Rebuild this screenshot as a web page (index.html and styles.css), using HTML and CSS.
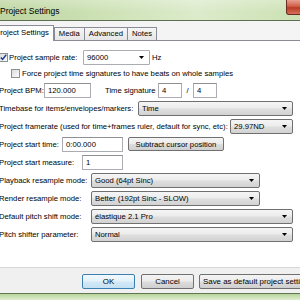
FILE: index.html
```html
<!DOCTYPE html>
<html>
<head>
<meta charset="utf-8">
<link rel="stylesheet" href="styles.css">
</head>
<body>
<div class="window">
  <div class="titlebar">
    <span class="title">Project Settings</span>
    <span class="close">x</span>
  </div>
  <div class="tabstrip">
    <div class="tab active">Project Settings</div>
    <div class="tab">Media</div>
    <div class="tab">Advanced</div>
    <div class="tab">Notes</div>
  </div>
  <div class="panel">
    <div class="row short">
      <span class="check"><svg width="7" height="7" viewBox="0 0 7 7"><path d="M0.8 3.4 L2.6 5.4 L6.2 0.8" fill="none" stroke="#1f3f95" stroke-width="1.5"/></svg></span>
      <span class="lbl w74">Project sample rate:</span>
      <span class="combo edit w67"><span>96000</span><svg class="arr" width="5" height="3" viewBox="0 0 5 3"><path d="M0 0H5L2.5 3Z" fill="#000"/></svg></span>
      <span class="hz">Hz</span>
    </div>
    <div class="row short indent">
      <span class="check"></span>
      <span class="lbl">Force project time signatures to have beats on whole samples</span>
    </div>
    <div class="row">
      <span class="lbl w45">Project BPM:</span>
      <span class="input w47">120.000</span>
      <span class="lbl ts">Time signature</span>
      <span class="input w24">4</span>
      <span class="slash">/</span>
      <span class="input w24">4</span>
    </div>
    <div class="row">
      <span class="lbl w139">Timebase for items/envelopes/markers:</span>
      <span class="combo w155"><span>Time</span><svg class="arr" width="5" height="3" viewBox="0 0 5 3"><path d="M0 0H5L2.5 3Z" fill="#000"/></svg></span>
    </div>
    <div class="row">
      <span class="lbl w231">Project framerate (used for time+frames ruler, default for sync, etc):</span>
      <span class="combo w63"><span>29.97ND</span><svg class="arr" width="5" height="3" viewBox="0 0 5 3"><path d="M0 0H5L2.5 3Z" fill="#000"/></svg></span>
    </div>
    <div class="row">
      <span class="lbl w63">Project start time:</span>
      <span class="input w61">0:00.000</span>
      <span class="btn sub">Subtract cursor position</span>
    </div>
    <div class="row">
      <span class="lbl w83">Project start measure:</span>
      <span class="input w41">1</span>
    </div>
    <div class="row">
      <span class="lbl w92">Playback resample mode:</span>
      <span class="combo w169"><span>Good (64pt Sinc)</span><svg class="arr" width="5" height="3" viewBox="0 0 5 3"><path d="M0 0H5L2.5 3Z" fill="#000"/></svg></span>
    </div>
    <div class="row">
      <span class="lbl w92">Render resample mode:</span>
      <span class="combo w169"><span>Better (192pt Sinc - SLOW)</span><svg class="arr" width="5" height="3" viewBox="0 0 5 3"><path d="M0 0H5L2.5 3Z" fill="#000"/></svg></span>
    </div>
    <div class="row">
      <span class="lbl w92">Default pitch shift mode:</span>
      <span class="combo w202"><span>élastique 2.1 Pro</span><svg class="arr" width="5" height="3" viewBox="0 0 5 3"><path d="M0 0H5L2.5 3Z" fill="#000"/></svg></span>
    </div>
    <div class="row">
      <span class="lbl w92">Pitch shifter parameter:</span>
      <span class="combo w202"><span>Normal</span><svg class="arr" width="5" height="3" viewBox="0 0 5 3"><path d="M0 0H5L2.5 3Z" fill="#000"/></svg></span>
    </div>
  </div>
  <div class="footer">
    <span class="btn ok">OK</span>
    <span class="btn cancel">Cancel</span>
    <span class="btn save">Save as default project settings</span>
  </div>
  <div class="frame"></div>
</div>
</body>
</html>
```
FILE: styles.css
```css
html, body {
  margin: 0;
  padding: 0;
  width: 300px;
  height: 300px;
  overflow: hidden;
  background: #ffffff;
}

.window {
  width: 330px;
  margin-left: -1px;
  font-family: "Liberation Sans", Arial, sans-serif;
  font-size: 7.7px;
  color: #000;
  display: flex;
  flex-direction: column;
}

.titlebar {
  height: 20px;
  border-bottom: 1px solid #5d6e52;
  background:
    linear-gradient(to bottom, rgba(255,255,255,0.25), rgba(255,255,255,0) 60%),
    linear-gradient(to right, #bdd5a0 0%, #cfe3b8 35%, #dcebcb 60%, #cfe3b8 85%, #c4dbab 100%);
  display: flex;
  align-items: flex-start;
  box-sizing: content-box;
}

.title {
  font-size: 8.5px;
  line-height: 10px;
  padding-top: 6px;
  padding-left: 1px;
}

.close {
  margin-left: auto;
  margin-right: 3px;
  width: 40px;
  height: 15px;
  box-sizing: border-box;
  border: 1px solid #6b2a22;
  border-top: none;
  border-radius: 0 0 3px 3px;
  background: linear-gradient(to bottom, #e8a090 0%, #d06048 45%, #b83a26 55%, #d8705a 100%);
  color: #fff;
  font-weight: bold;
  font-size: 9px;
  line-height: 13px;
  padding-left: 13px;
}

.tabstrip {
  height: 19px;
  background: #f4f4f4;
  border-bottom: 1px solid #898c95;
  display: flex;
  align-items: flex-end;
  padding-left: 0;
}

.tab {
  height: 12px;
  line-height: 11px;
  padding: 0 4px;
  border: 1px solid #898c95;
  border-bottom: none;
  background: linear-gradient(to bottom, #f6f6f6, #e6e6e6);
  margin-left: -1px;
  white-space: nowrap;
}

.tab.active {
  height: 15px;
  line-height: 14px;
  margin-left: -9px;
  padding: 0 4px;
  background: #ffffff;
  margin-bottom: -1px;
  position: relative;
  z-index: 1;
}

.tab.active + .tab {
  margin-left: 0;
}

.panel {
  height: 226px;
  box-sizing: border-box;
  padding-top: 8px;
  background: #ffffff;
  display: flex;
  flex-direction: column;
}

.row {
  height: 18px;
  display: flex;
  align-items: center;
  white-space: nowrap;
}

.row.short {
  height: 16px;
}

.row.indent {
  padding-left: 12px;
}

.lbl {
  display: inline-block;
  flex: none;
}

.check {
  width: 9px;
  height: 9px;
  box-sizing: border-box;
  border: 1px solid #8e8f8f;
  background: linear-gradient(to bottom right, #dcdcdc, #fbfbfb);
  margin-right: 1px;
  display: flex;
  align-items: center;
  justify-content: center;
  flex: none;
}

.indent .check {
  margin-right: 2px;
}

.w74 { width: 74px; }
.w45 { width: 45px; }
.w139 { width: 139px; }
.w231 { width: 231px; }
.w63 { width: 63px; }
.w83 { width: 83px; }
.w92 { width: 92px; }

.input {
  height: 15px;
  box-sizing: border-box;
  border: 1px solid #abadb3;
  border-top-color: #8e9094;
  background: #fff;
  padding-left: 3px;
  line-height: 13px;
  flex: none;
}

.w47 { width: 47px; }
.w24 { width: 24px; }
.w61 { width: 61px; }
.w41 { width: 41px; }
.w67 { width: 67px; }
.w155 { width: 155px; }
.w169 { width: 169px; }
.w202 { width: 202px; }

.ts {
  margin-left: 14px;
  width: 53px;
}

.slash {
  width: 11px;
  text-align: center;
  flex: none;
}

.combo {
  height: 15px;
  box-sizing: border-box;
  border: 1px solid #707070;
  border-radius: 2px;
  background: linear-gradient(to bottom, #f5f5f5 0%, #ececec 45%, #dedede 55%, #d2d2d2 100%);
  padding: 0 5px 0 3px;
  display: flex;
  align-items: center;
  justify-content: space-between;
  flex: none;
}

.combo.edit {
  background: #ffffff;
  border-color: #abadb3;
  border-radius: 1px;
}

.arr {
  flex: none;
}

.hz {
  margin-left: 2px;
}

.btn {
  height: 14px;
  box-sizing: border-box;
  border: 1px solid #707070;
  border-radius: 2px;
  background: linear-gradient(to bottom, #f4f4f4 0%, #ebebeb 48%, #dddddd 52%, #cfcfcf 100%);
  display: flex;
  align-items: center;
  justify-content: center;
  flex: none;
  white-space: nowrap;
}

.sub {
  width: 96px;
  margin-left: 5px;
}

.footer {
  height: 26px;
  box-sizing: border-box;
  border-top: 1px solid #d6d6d6;
  background: #f0f0f0;
  display: flex;
  align-items: flex-start;
  padding-top: 6px;
  padding-left: 83px;
}

.footer .btn {
  height: 15px;
  font-size: 7.9px;
}

.ok {
  width: 53px;
  border-color: #3c7fb1;
  background: linear-gradient(to bottom, #f2f9fd 0%, #e3f1fa 48%, #d2e8f6 52%, #c6e1f3 100%);
}

.cancel {
  width: 53px;
  margin-left: 6px;
}

.save {
  width: 140px;
  margin-left: 5px;
  justify-content: flex-start;
  padding-left: 3px;
}

.frame {
  height: 7px;
  border-top: 1px solid #5f7752;
  background: linear-gradient(to bottom, #b7d39a, #d3e6bf 60%, #e8f2de);
}
```
